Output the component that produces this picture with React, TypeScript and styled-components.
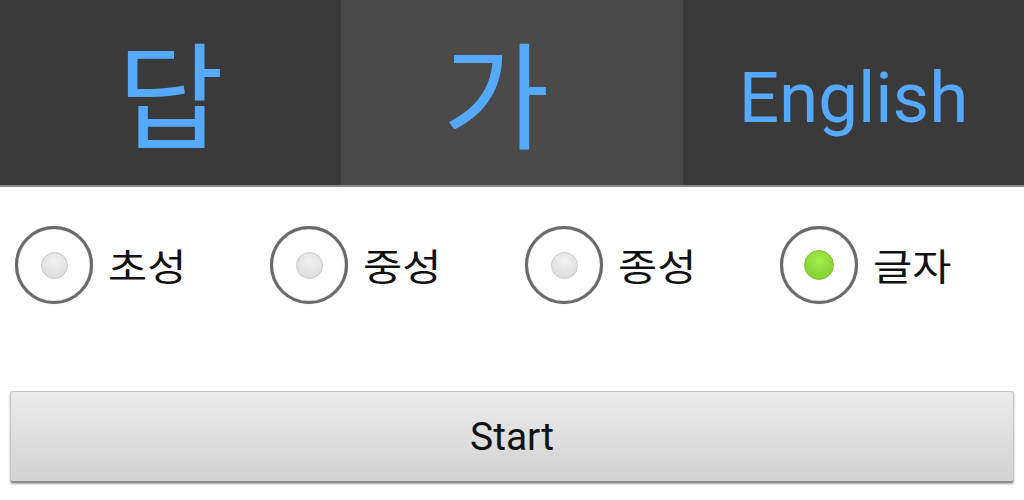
import React, { useState } from 'react';
import styled, { createGlobalStyle } from 'styled-components';

const GlobalStyle = createGlobalStyle`
    html, body {
        margin: 0;
        padding: 0;
        background: #ffffff;
    }
    body {
        font-family: Roboto, "Noto Sans CJK KR", sans-serif;
    }
`;

const Screen = styled.div`
    width: 1024px;
    height: 500px;
    overflow: hidden;
    background: #ffffff;
`;

const Header = styled.div`
    display: grid;
    grid-template-columns: 341px 342px 341px;
    height: 185px;
    border-bottom: 2px solid #8a8a8a;
`;

const Tab = styled.div<{ $active?: boolean }>`
    display: flex;
    align-items: center;
    justify-content: center;
    background: ${(p) => (p.$active ? '#4a4a4a' : '#3a3a3a')};
    color: #55aaff;
`;

const BigGlyph = styled.span<{ $shift?: number }>`
    font-family: "Noto Sans CJK KR", sans-serif;
    font-size: 116px;
    line-height: 1;
    margin-left: ${(p) => p.$shift ?? 0}px;
    margin-top: -8px;
`;

const LangLabel = styled.span`
    font-family: Roboto, sans-serif;
    font-size: 71px;
    line-height: 1;
    margin-top: 10px;
`;

const RadioRow = styled.div`
    display: grid;
    grid-template-columns: repeat(4, 255px);
    padding: 38px 0 0 15px;
    height: 80px;
`;

const RadioItem = styled.label`
    display: flex;
    align-items: center;
    gap: 15px;
    cursor: pointer;
`;

const Ring = styled.span`
    width: 78px;
    height: 78px;
    flex: none;
    box-sizing: border-box;
    border-radius: 50%;
    border: 3px solid #6a6a6a;
    box-shadow: inset 0 0 1px #999, 0 0 1px #999;
    display: flex;
    align-items: center;
    justify-content: center;
    background: #ffffff;
`;

const Dot = styled.span<{ $on?: boolean }>`
    width: ${(p) => (p.$on ? 30 : 27)}px;
    height: ${(p) => (p.$on ? 30 : 27)}px;
    border-radius: 50%;
    box-sizing: border-box;
    border: 1px solid ${(p) => (p.$on ? '#7fc030' : '#c8c8c8')};
    background: ${(p) =>
        p.$on
            ? 'radial-gradient(circle at 50% 35%, #a3f04c 0%, #8ed93a 55%, #7cc82e 100%)'
            : 'radial-gradient(circle at 50% 35%, #f2f2f2 0%, #e2e2e2 60%, #d4d4d4 100%)'};
`;

const RadioText = styled.span`
    font-family: "Noto Sans CJK KR", sans-serif;
    font-size: 37px;
    color: #111111;
    line-height: 1;
    transform: scaleX(1.15);
    transform-origin: left center;
`;

const ButtonWrap = styled.div`
    padding: 86px 10px 0 10px;
`;

const StartButton = styled.button`
    width: 100%;
    height: 92px;
    border: 1px solid #c4c4c4;
    border-bottom: 2px solid #8e8e8e;
    border-radius: 3px;
    background: linear-gradient(#ececec, #d2d2d2);
    box-shadow: 0 1px 2px rgba(0, 0, 0, 0.35);
    font-family: Roboto, sans-serif;
    font-size: 39px;
    color: #111111;
    padding: 0;
    cursor: pointer;
`;

const options = ['초성', '중성', '종성', '글자'];

export default function App() {
    const [selected, setSelected] = useState<number>(3);

    return (
        <Screen>
            <GlobalStyle />
            <Header>
                <Tab>
                    <BigGlyph>답</BigGlyph>
                </Tab>
                <Tab $active>
                    <BigGlyph $shift={-32}>가</BigGlyph>
                </Tab>
                <Tab>
                    <LangLabel>English</LangLabel>
                </Tab>
            </Header>
            <RadioRow>
                {options.map((o, i) => (
                    <RadioItem key={o} onClick={() => setSelected(i)}>
                        <Ring>
                            <Dot $on={selected === i} />
                        </Ring>
                        <RadioText>{o}</RadioText>
                    </RadioItem>
                ))}
            </RadioRow>
            <ButtonWrap>
                <StartButton>Start</StartButton>
            </ButtonWrap>
        </Screen>
    );
}
